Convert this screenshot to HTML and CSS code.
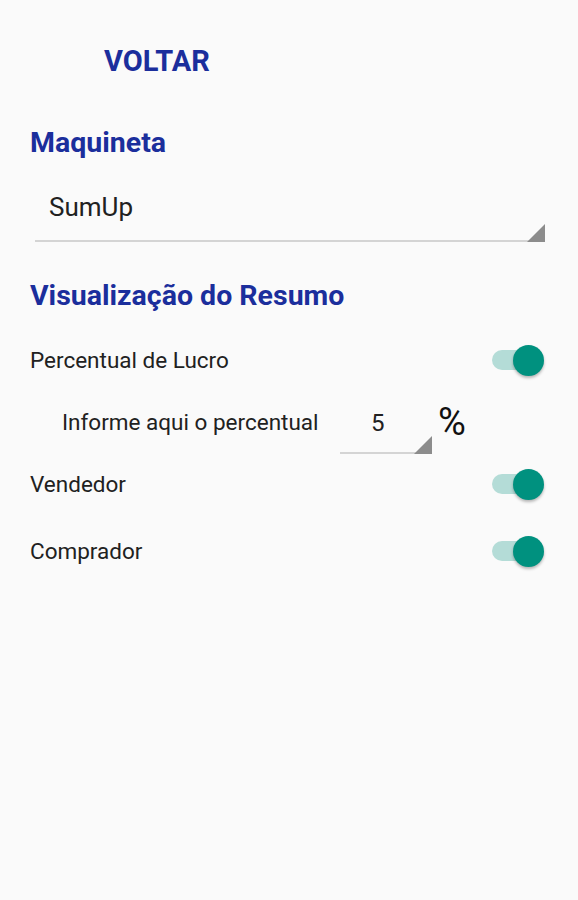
FILE: index.html
```
<!DOCTYPE html>
<html lang="pt">
<head>
<meta charset="utf-8">
<title>Configurações</title>
<link rel="stylesheet" href="styles.css">
</head>
<body>
<div class="screen">
  <div class="topbar">
    <button class="back-btn" type="button">VOLTAR</button>
  </div>

  <h2 class="section-title title-maquineta">Maquineta</h2>
  <div class="spinner spinner-wide">
    <span class="spinner-value">SumUp</span>
    <span class="spinner-arrow"></span>
  </div>

  <h2 class="section-title title-resumo">Visualização do Resumo</h2>

  <div class="row row-lucro">
    <span class="row-label">Percentual de Lucro</span>
    <span class="switch on"><span class="track"></span><span class="thumb"></span></span>
  </div>

  <div class="row row-sub">
    <span class="row-label sub-label">Informe aqui o percentual</span>
    <div class="spinner spinner-small">
      <span class="spinner-value">5</span>
      <span class="spinner-arrow"></span>
    </div>
    <span class="percent">%</span>
  </div>

  <div class="row row-vendedor">
    <span class="row-label">Vendedor</span>
    <span class="switch on"><span class="track"></span><span class="thumb"></span></span>
  </div>

  <div class="row row-comprador">
    <span class="row-label">Comprador</span>
    <span class="switch on"><span class="track"></span><span class="thumb"></span></span>
  </div>
</div>
</body>
</html>
```

FILE: styles.css
```
* { box-sizing: border-box; }

html, body {
  margin: 0;
  padding: 0;
  background: #fafafa;
}

body {
  font-family: Roboto, "Noto Sans", "Liberation Sans", sans-serif;
  color: #212121;
  width: 578px;
  height: 900px;
  overflow: hidden;
}

.screen {
  display: flex;
  flex-direction: column;
  padding: 0 34px 0 30px;
}

.topbar {
  height: 42px;
  margin-top: 40px;
  display: flex;
  align-items: center;
  padding-left: 74px;
}

.back-btn {
  border: 0;
  background: none;
  padding: 0;
  margin: 0;
  font-family: Roboto, "Liberation Sans", sans-serif;
  font-weight: 700;
  font-size: 29px;
  line-height: 42px;
  color: #1b2e9c;
  letter-spacing: 0;
}

.section-title {
  margin: 0;
  height: 40px;
  line-height: 40px;
  font-size: 28.5px;
  font-weight: 700;
  color: #1b2e9c;
}

.title-maquineta { margin-top: 41px; }
.title-resumo { margin-top: 34px; }

.spinner {
  position: relative;
  display: flex;
  align-items: center;
  border-bottom: 2px solid #d4d4d4;
}

.spinner-wide {
  margin: 21px -1px 0 5px;
  height: 58px;
  padding: 0 0 10px 14px;
}

.spinner-wide .spinner-value {
  font-size: 26px;
  line-height: 46px;
}

.spinner-arrow {
  position: absolute;
  right: 0;
  bottom: -2px;
  width: 0;
  height: 0;
  border-left: 18px solid transparent;
  border-bottom: 18px solid #8c8c8c;
}

.row {
  display: flex;
  align-items: center;
  height: 62px;
}

.row-lucro { margin-top: 13px; }
.row-comprador { margin-top: 5px; }

.row-label {
  flex: 1;
  font-size: 22.5px;
  line-height: 30px;
}

.sub-label {
  flex: 0 0 auto;
  padding-left: 32px;
  width: 310px;
}

.spinner-small {
  width: 92px;
  height: 46px;
  margin-top: 18px;
  padding-left: 31px;
  justify-content: flex-start;
}

.spinner-small .spinner-value {
  font-size: 24px;
  line-height: 30px;
  margin-top: -14px;
}

.percent {
  font-size: 38px;
  line-height: 40px;
  margin-left: 6px;
  color: #111;
}

.switch {
  position: relative;
  width: 54px;
  height: 34px;
  display: flex;
  align-items: center;
}

.switch .track {
  display: block;
  width: 50px;
  height: 20px;
  border-radius: 10px;
  background: #b4dcd7;
  margin-left: 2px;
}

.switch .thumb {
  position: absolute;
  right: 0;
  top: 2px;
  width: 31px;
  height: 31px;
  border-radius: 50%;
  background: #00917f;
  box-shadow: 0 2px 3px rgba(0, 0, 0, 0.28);
}
```
